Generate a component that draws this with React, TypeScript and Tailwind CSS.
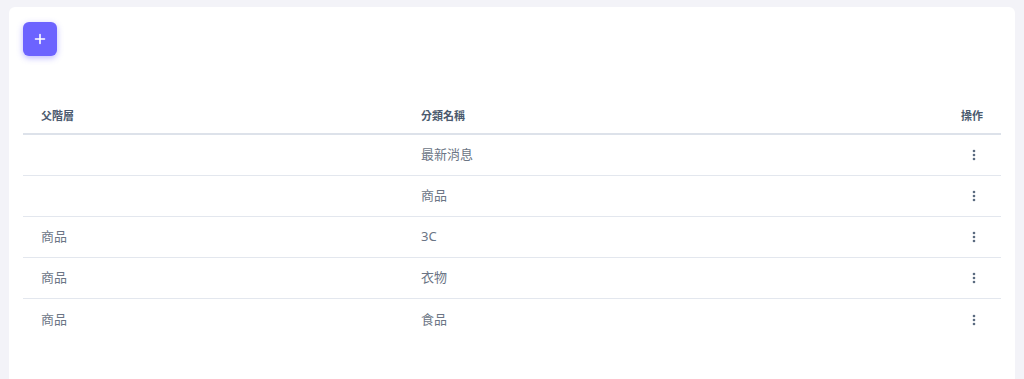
const FONT = "font-['Noto_Sans','Noto_Sans_CJK_TC',sans-serif]"

const rows = [
  { parent: '', name: '最新消息' },
  { parent: '', name: '商品' },
  { parent: '商品', name: '3C' },
  { parent: '商品', name: '衣物' },
  { parent: '商品', name: '食品' },
]

function DotsIcon() {
  return (
    <svg width="4" height="12" viewBox="0 0 4 12" className="fill-[#5b6b80]">
      <circle cx="2" cy="2" r="1.3" />
      <circle cx="2" cy="6" r="1.3" />
      <circle cx="2" cy="10" r="1.3" />
    </svg>
  )
}

export default function App() {
  return (
    <div className={`h-[379px] overflow-hidden bg-[#f3f3f8] pl-[9px] pr-[9px] pt-[7px] ${FONT}`}>
      <div className="h-[420px] rounded-md bg-white px-[14px] pt-[15px]">
        <button className="flex h-[34px] w-[34px] items-center justify-center rounded-md bg-[#6c63ff] text-white shadow-[0_2px_6px_rgba(108,99,255,0.45)]">
          <svg width="12" height="12" viewBox="0 0 12 12" stroke="white" strokeWidth="1.6" strokeLinecap="round">
            <path d="M6 1.5v9M1.5 6h9" />
          </svg>
        </button>
        <div className="mt-[43px] w-[978px]">
          <div className="grid h-[36px] grid-cols-[380px_1fr_auto] items-center border-b-2 border-[#dde2ea] text-[11px] font-bold text-[#4b5a6e]">
            <div className="pl-[18px]">父階層</div>
            <div className="pl-[18px]">分類名稱</div>
            <div className="pr-[18px]">操作</div>
          </div>
          {rows.map((r, i) => (
            <div
              key={i}
              className="grid h-[41px] grid-cols-[380px_1fr_auto] items-center border-b border-[#e3e7ee] text-[13px] text-[#6b7585] last:border-b-0"
            >
              <div className="pl-[18px]">{r.parent}</div>
              <div className="pl-[18px]">{r.name}</div>
              <div className="flex w-[40px] justify-end pr-[25px]">
                <DotsIcon />
              </div>
            </div>
          ))}
        </div>
      </div>
    </div>
  )
}
